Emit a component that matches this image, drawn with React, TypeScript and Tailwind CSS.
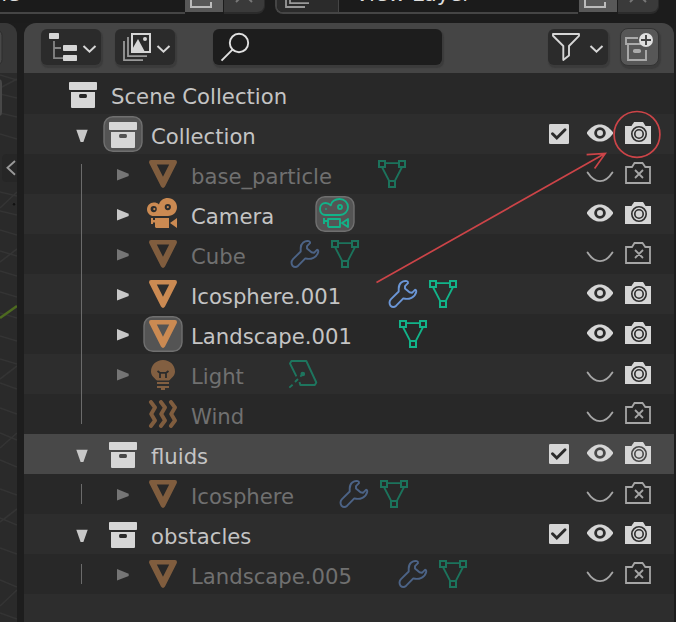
import type { ReactNode } from "react";

const ORANGE = "#cb8a52";
const GREEN = "#12b389";
const BLUE = "#6b96d6";
const LIGHT = "#d6d6d6";

type CellProps = { children?: ReactNode; dim?: boolean; selected?: boolean };

function Cell({ children, dim, selected }: CellProps) {
  return (
    <svg width="40" height="40" viewBox="0 0 40 40" fill="none" className="shrink-0">
      {selected && (
        <rect x="1" y="2.7" width="38" height="34.6" rx="9" fill="#545454" stroke="#707070" strokeWidth="1.4" />
      )}
      <g opacity={dim ? 0.54 : 1}>{children}</g>
    </svg>
  );
}

function Archive() {
  return (
    <g fill={LIGHT}>
      <rect x="6" y="8" width="28" height="8" rx="0.8" />
      <path
        fillRule="evenodd"
        d="M8 18H32V33.3L31.3 34H8.7L8 33.3ZM17.3 20H22.7Q24 20 24 22T22.7 24H17.3Q16 24 16 22T17.3 20Z"
      />
    </g>
  );
}

function MeshObject() {
  return (
    <path
      fill={ORANGE}
      fillRule="evenodd"
      d="M8 6H32Q34 6 34 8.2L33.6 9.5L22 32.6Q20 35.2 18 32.6L6.4 9.5L6 8.2Q6 6 8 6ZM13.8 10.6L20 22.8L26.2 10.6Z"
    />
  );
}

function CameraObject() {
  return (
    <g fill={ORANGE}>
      <path
        fillRule="evenodd"
        d="M10.7 8.4C13 8.4 14.6 9 16 10.4C17 6.5 20.5 4 24.8 4C30 4 34 8 34 13C34 18.2 30.2 22 25 22H10.7C7 22 4 19 4 15.2C4 11.4 7 8.4 10.7 8.4ZM10.7 12A3.1 3.1 0 1 0 10.7 18.2A3.1 3.1 0 1 0 10.7 12ZM24.8 10A3.1 3.1 0 1 0 24.8 16.2A3.1 3.1 0 1 0 24.8 10Z"
      />
      <circle cx="11.3" cy="15.1" r="1.1" />
      <circle cx="24.8" cy="13.1" r="1.1" />
      <path d="M8 24H10V26H12V24H26V34H13L12 33V28.6H10V30H8ZM27 29L34 24V34Z" />
    </g>
  );
}

function CameraData() {
  return (
    <g stroke={GREEN} strokeWidth="1.9" strokeLinejoin="round">
      <path d="M10.6 9C13 9 14.5 10 15.8 11.3C16.2 7.7 20 5 24.6 5C29.5 5 33 8.5 33 13C33 17.5 29.5 21 25 21H10.6C7.3 21 5 18.3 5 15C5 11.7 7.3 9 10.6 9Z" />
      <circle cx="25" cy="13" r="2" />
      <circle cx="11" cy="15" r="0.5" strokeWidth="1" />
      <path d="M13 25H25V33H14L13 32ZM9 24V30M9 27H13M27 29L33 25V33Z" />
    </g>
  );
}

function Bulb() {
  return (
    <g>
      <path
        fill={ORANGE}
        d="M20 6C26.8 6 32 11 32 17.4C32 21 29.5 23.4 26 26.4H14C10.5 23.4 8 21 8 17.4C8 11 13.2 6 20 6ZM14 28H26V30H14ZM14 32H26V34H22V36H18V34H14Z"
      />
      <path stroke="#2b2b2b" strokeWidth="1.8" d="M14.5 17L16.8 18.8H23.2L25.5 17M17 19V24M23 19V24" />
    </g>
  );
}

function Wind() {
  return (
    <g stroke={ORANGE} strokeWidth="3.9" strokeLinecap="round" strokeLinejoin="round">
      <path d="M7.9 8L12 13.5L8.2 20L12 26.5L7.9 32" />
      <path d="M17.9 8L22 13.5L18.2 20L22 26.5L17.9 32" />
      <path d="M27.9 8L32 13.5L28.2 20L32 26.5L27.9 32" />
    </g>
  );
}

function MeshData() {
  return (
    <g stroke={GREEN} strokeWidth="2">
      <path d="M7 7H13V13H7ZM27 7H33V13H27ZM17 27H23V33H17Z" />
      <path strokeWidth="1.8" d="M14 9.2H26M10.2 13.5L17.2 27M29.8 13.5L22.8 27" />
    </g>
  );
}

function Wrench() {
  return (
    <path
      stroke={BLUE}
      strokeWidth="1.9"
      strokeLinejoin="round"
      d="M23.8 7.2C20 6.3 15.5 9.3 15.7 14.5V17.5L8 25.2C6.4 27 6.4 30 7.5 31.8C9.5 33.6 11.5 33.2 13.2 31.7L20.3 24.4C26 26 32 23.5 33.3 17.7Q33.2 15.8 32 15.8L29 18.8L26.5 18.3L22 14.5V12.2L25 9.2Q25.4 7.8 23.8 7.2Z"
    />
  );
}

function LightData() {
  return (
    <g stroke={GREEN} strokeWidth="1.9" strokeLinejoin="round">
      <path d="M13.4 22.3L7 9.5L8.4 7H23.3L33.3 28.5L31.8 31H17.3L16.5 28" />
      <path d="M12 28L15 25M6.3 33.6L9.6 30.8" />
      <path d="M17.3 22.6L20 19.6" />
      <circle cx="19.8" cy="20" r="1.4" fill={GREEN} />
    </g>
  );
}

function Checkbox() {
  return (
    <>
      <rect x="10" y="10" width="20" height="20" rx="1.3" fill={LIGHT} />
      <path d="M13.5 19.8L17.8 24L26 15.8" stroke="#2b2b2b" strokeWidth="3" strokeLinecap="round" />
    </>
  );
}

function EyeOpen() {
  return (
    <path
      fill={LIGHT}
      fillRule="evenodd"
      d="M8 18.3C15.5 7.8 26.5 7.8 34 18.3V19.7C26.5 30.2 15.5 30.2 8 19.7ZM21 13.2A5.8 5.8 0 1 0 21 24.8A5.8 5.8 0 1 0 21 13.2ZM21 16A3 3 0 1 1 21 22A3 3 0 1 1 21 16Z"
    />
  );
}

function EyeClosed() {
  return <path d="M8.6 18.5C16 30 26 30 33.4 18.5" stroke="#a6a6a6" strokeWidth="1.9" strokeLinecap="round" />;
}

function RenderOn() {
  return (
    <>
      <path
        fill={LIGHT}
        fillRule="evenodd"
        d="M6 12H12.5C13.4 10.2 14.6 9.3 15 8H24C24.8 9.3 25.8 10.5 26.5 12H32V30H6ZM20 12A8 8 0 1 0 20 28A8 8 0 1 0 20 12Z"
      />
      <circle cx="20" cy="20" r="5.7" stroke={LIGHT} strokeWidth="1.4" />
      <circle cx="20" cy="20" r="3.4" fill={LIGHT} />
    </>
  );
}

function RenderOff() {
  return (
    <path
      stroke="#a6a6a6"
      strokeWidth="1.8"
      d="M7 13H13L15.5 9H23.5L26.3 13H31V29H7ZM16 16L24 24M24 16L16 24"
    />
  );
}

const icons = {
  mesh: <MeshObject />,
  camera: <CameraObject />,
  bulb: <Bulb />,
  wind: <Wind />,
  meshData: <MeshData />,
  cameraData: <CameraData />,
  lightData: <LightData />,
  wrench: <Wrench />,
};

type IconName = keyof typeof icons;

function Toggles({ check, eye, render }: { check?: boolean; eye: boolean; render: boolean }) {
  return (
    <div className="ml-auto flex pr-[15px]">
      {check && (
        <Cell>
          <Checkbox />
        </Cell>
      )}
      <Cell>{eye ? <EyeOpen /> : <EyeClosed />}</Cell>
      <Cell>{render ? <RenderOn /> : <RenderOff />}</Cell>
    </div>
  );
}

function Label({ children, width }: { children: string; width?: string }) {
  return (
    <div className={`shrink-0 pl-2 leading-[46px] whitespace-nowrap ${width ?? ""}`}>
      <span className="block origin-left scale-x-[0.963]">{children}</span>
    </div>
  );
}

function CollectionRow({ name, bg, selected }: { name: string; bg: string; selected?: boolean }) {
  return (
    <div className={`flex h-10 items-start pl-[39px] text-[#c4c4c4] ${bg}`}>
      <Cell>
        <path d="M13.3 15.8H24.7L20.4 28H17.6Z" fill="#c8c8c8" />
      </Cell>
      <Cell selected={selected}>
        <Archive />
      </Cell>
      <Label>{name}</Label>
      <Toggles check eye render />
    </div>
  );
}

type ObjectRowProps = {
  name: string;
  bg: string;
  labelWidth: string;
  icon: IconName;
  data?: IconName[];
  dim?: boolean;
  leaf?: boolean;
  selected?: boolean;
  dataSelected?: boolean;
  render?: boolean;
  guide: string;
};

function ObjectRow(p: ObjectRowProps) {
  return (
    <div className={`flex h-10 items-start pl-[39px] ${p.bg} ${p.dim ? "text-[#707070]" : "text-[#c4c4c4]"}`}>
      <Cell>
        <path d={p.guide} stroke="#6b6b6b" strokeWidth="1" />
      </Cell>
      <Cell>
        {!p.leaf && <path d="M14 15V26.6L25.7 22V19.8Z" fill={p.dim ? "#757575" : "#c8c8c8"} />}
      </Cell>
      <Cell dim={p.dim} selected={p.selected}>
        {icons[p.icon]}
      </Cell>
      <Label width={p.labelWidth}>{p.name}</Label>
      {p.data?.map((d, i) => (
        <Cell key={i} dim={p.dim} selected={p.dataSelected}>
          {icons[d]}
        </Cell>
      ))}
      <Toggles eye={!p.dim} render={!p.dim || !!p.render} />
    </div>
  );
}

function SceneButtons() {
  return (
    <>
      <div className="h-3 w-[38px] bg-[#585858]">
        <svg width="38" height="12" fill="none">
          <path d="M6 0V7H26V2" stroke="#bcbcbc" strokeWidth="2" />
        </svg>
      </div>
      <div className="ml-px h-[14px] w-[41px] rounded-br-lg border-r border-b-2 border-[#2b2b2b] bg-[#3a3a3a]">
        <svg width="40" height="12" fill="none">
          <path d="M12 2L15.5 -1.5M28 2L24.5 -1.5" stroke="#777" strokeWidth="2" />
        </svg>
      </div>
    </>
  );
}

function TopBar() {
  return (
    <div className="flex h-[23px] items-start overflow-hidden bg-[#1c1c1c] text-[#dedede]">
      <div className="flex h-[14px] w-[185px] border-b-2 border-[#454545] bg-[#1b1b1b]">
        <span className="-mt-[28px] -ml-[45px] h-3 origin-left scale-x-[0.97] leading-[44px] whitespace-nowrap">
          Scene
        </span>
      </div>
      <SceneButtons />
      <div className="ml-[10px] flex h-[14px] w-[303px] overflow-hidden rounded-bl-lg border-b-2 border-l-2 border-[#454545] bg-[#1b1b1b]">
        <div className="w-[62px] shrink-0 border-r border-[#454545] bg-[#2b2b2b]">
          <svg width="60" height="12" fill="none">
            <path d="M9 0V7H28M13 0V3.2H32" stroke="#999" strokeWidth="1.8" />
          </svg>
        </div>
        <span className="-mt-[28px] ml-[16px] origin-left scale-x-[0.963] leading-[44px] whitespace-nowrap">
          View Layer
        </span>
      </div>
      <div className="w-px" />
      <SceneButtons />
    </div>
  );
}

function ViewportEdge() {
  return (
    <div className="flex w-[17px] shrink-0 flex-col overflow-hidden rounded-tr-xl bg-[#2a2a2a]">
      <svg width="17" height="599" viewBox="0 23 17 599" fill="none">
        <path d="M0 23H17V73H0Z" fill="#383838" />
        <rect x="-20" y="29.5" width="22" height="36" rx="6" fill="#484848" stroke="#2d2d2d" />
        <path
          d="M0 75L17 80M0 94L17 98M0 88L17 79M0 113L17 117M0 134L17 139M0 208L17 192M0 230L17 235M0 211L17 215M0 192L17 196M0 251L17 256M0 262L17 249M0 271L17 276M0 292L17 297M0 313L17 318M0 336L17 341M0 359L17 364M0 379L17 366M0 383L17 389M0 408L17 414M0 433L17 440M0 448L17 433M0 460L17 467M0 489L17 495M0 518L17 525M0 522L17 509M0 548L17 554M0 580L17 587M0 606L17 590M0 613L17 619"
          stroke="#343434"
          strokeWidth="1.6"
        />
        <path d="M0 318L17 306" stroke="#4d6a20" strokeWidth="2.6" />
        <rect x="-4" y="79" width="6" height="37" rx="4" fill="#484848" />
        <path d="M17 154H7Q2 154 2 159V177Q2 182 7 182H17Z" fill="#262626" />
        <path d="M15 161L7.5 167.8L15 174.7" stroke="#999" strokeWidth="1.9" />
        <circle cx="14" cy="204.3" r="1.2" fill="#111" />
      </svg>
    </div>
  );
}

function Header() {
  const button = "flex h-9 rounded-md bg-[#2b2b2b] shadow-[1px_2px_1px_1px_#3b3b3b]";
  return (
    <div className="flex h-[50px] shrink-0 items-start rounded-t-xl bg-[#454545] pt-[6px] pr-[15px] pl-[17px]">
      <div className={`${button} w-[60px]`}>
        <svg width="60" height="36" fill="none">
          <path d="M13 12V29.2H22M13 19H20" stroke="#858585" strokeWidth="1.8" />
          <g fill={LIGHT}>
            <rect x="8" y="4" width="10" height="6" rx="0.8" />
            <rect x="22" y="16" width="14" height="6" rx="0.8" />
            <rect x="22" y="26" width="14" height="6" rx="0.8" />
          </g>
          <path d="M42.5 17L48.5 22.7L54.5 17" stroke={LIGHT} strokeWidth="2" />
        </svg>
      </div>
      <div className={`${button} ml-[14px] w-[60px]`}>
        <svg width="60" height="36" fill="none">
          <path d="M9 12V31.2H28M13 8V27.2H32" stroke="#999" strokeWidth="1.8" />
          <rect x="17" y="5" width="18" height="18" stroke={LIGHT} strokeWidth="2" />
          <path d="M17 23V20.5L23 10L30 23Z" fill={LIGHT} />
          <circle cx="30" cy="10" r="2" fill={LIGHT} />
          <path d="M42.5 17L48.5 22.7L54.5 17" stroke={LIGHT} strokeWidth="2" />
        </svg>
      </div>
      <div className="ml-[38px] flex h-9 w-[229px] rounded-md bg-[#1d1d1d] shadow-[1px_2px_1px_1px_#3b3b3b]">
        <svg width="40" height="36" fill="none">
          <circle cx="26" cy="14" r="9.2" stroke="#e0e0e0" strokeWidth="1.9" />
          <path d="M19.5 20.6L8.5 31.6" stroke="#e0e0e0" strokeWidth="2" />
        </svg>
      </div>
      <div className={`${button} ml-auto w-[60px]`}>
        <svg width="60" height="36" fill="none">
          <path
            d="M5 5H31V6.8L21 17V26.5L15.3 31V17L5 6.8Z"
            stroke={LIGHT}
            strokeWidth="1.9"
            strokeLinejoin="round"
          />
          <path d="M42.5 17L48.5 22.7L54.5 17" stroke={LIGHT} strokeWidth="2" />
        </svg>
      </div>
      <div className="-mt-px ml-3 flex h-[38px] w-[39px] rounded-lg border border-[#333] bg-[#575757] shadow-[1px_2px_1px_1px_#3b3b3b]">
        <svg width="37" height="36" fill="none">
          <path d="M17 9H5V15H20M7 16V31H25V21" stroke="#aaa" strokeWidth="1.9" />
          <rect x="12" y="20" width="8" height="4" rx="1.8" fill="#aaa" />
          <circle cx="25" cy="11" r="7" fill="#e0e0e0" />
          <path d="M25 6V16M20 11H30" stroke="#444" strokeWidth="1.9" />
        </svg>
      </div>
    </div>
  );
}

const EVEN = "bg-[#282828]";
const ODD = "bg-[#2d2d2d]";
const FULL = "M18.5 0V40";
const SHORT = "M18.5 10V30";

function Annotation() {
  return (
    <svg className="pointer-events-none absolute top-0 left-0" width="676" height="622" fill="none">
      <g stroke="#cc4448" strokeWidth="1.7">
        <circle cx="637" cy="134.4" r="22.9" />
        <path d="M376.5 282.6L605 153.5M586.6 154.6L605.3 153.5L594.6 168.6" />
      </g>
    </svg>
  );
}

export default function App() {
  return (
    <div className="relative flex h-[622px] w-[676px] flex-col overflow-hidden bg-[#1d1d1d] font-['DejaVu_Sans',sans-serif] text-[22px]">
      <TopBar />
      <div className="flex min-h-0 flex-1">
        <ViewportEdge />
        <div className="ml-[7px] flex w-[650px] flex-col">
          <Header />
          <div className="flex h-[41px] items-start bg-[#282828] pt-px pl-[39px] text-[#c4c4c4]">
            <Cell>
              <Archive />
            </Cell>
            <Label>Scene Collection</Label>
          </div>
          <CollectionRow name="Collection" bg={ODD} selected />
          <ObjectRow name="base_particle" bg={EVEN} icon="mesh" data={["meshData"]} labelWidth="w-[189px]" dim guide="M18.5 10V40" />
          <ObjectRow name="Camera" bg={ODD} icon="camera" data={["cameraData"]} labelWidth="w-[132px]" dataSelected guide={FULL} />
          <ObjectRow name="Cube" bg={EVEN} icon="mesh" data={["wrench", "meshData"]} labelWidth="w-[102px]" dim guide={FULL} />
          <ObjectRow name="Icosphere.001" bg={ODD} icon="mesh" data={["wrench", "meshData"]} labelWidth="w-[200px]" guide={FULL} />
          <ObjectRow name="Landscape.001" bg={EVEN} icon="mesh" data={["meshData"]} labelWidth="w-[210px]" selected guide={FULL} />
          <ObjectRow name="Light" bg={ODD} icon="bulb" data={["lightData"]} labelWidth="w-[100px]" dim render guide={FULL} />
          <ObjectRow name="Wind" bg={EVEN} icon="wind" labelWidth="w-[100px]" dim leaf guide="M18.5 0V30" />
          <CollectionRow name="fluids" bg="bg-[#484848]" />
          <ObjectRow name="Icosphere" bg={EVEN} icon="mesh" data={["wrench", "meshData"]} labelWidth="w-[151px]" dim guide={SHORT} />
          <CollectionRow name="obstacles" bg={ODD} />
          <ObjectRow name="Landscape.005" bg={EVEN} icon="mesh" data={["wrench", "meshData"]} labelWidth="w-[210px]" dim guide={SHORT} />
          <div className="flex-1 bg-[#2d2d2d]" />
        </div>
      </div>
      <Annotation />
    </div>
  );
}
